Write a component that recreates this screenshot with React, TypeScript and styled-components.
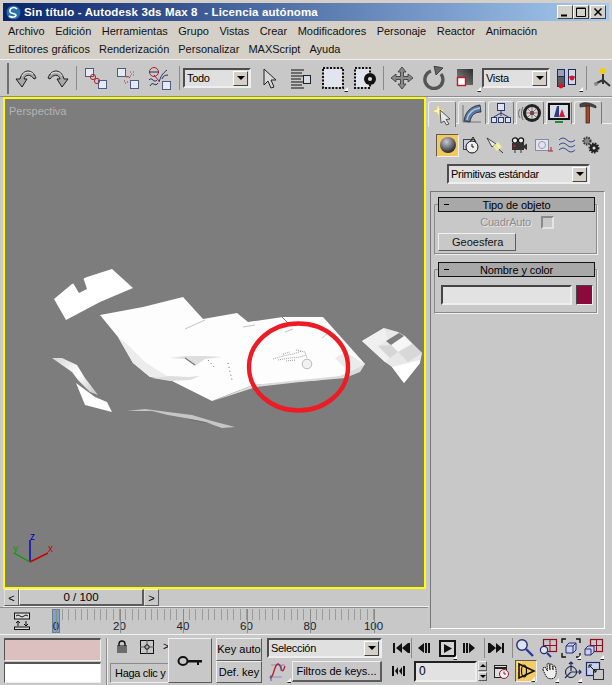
import React from "react";
import styled, {createGlobalStyle, css} from "styled-components";

const GlobalStyle = createGlobalStyle`
    html, body {
        margin: 0;
        padding: 0;
        background: #c8c8c8;
    }
    * {
        box-sizing: border-box;
    }
`;

const raised = css`
    border: 1px solid;
    border-color: #f0f0f0 #5c5c5c #5c5c5c #f0f0f0;
`;

const sunken = css`
    border: 1px solid;
    border-color: #5c5c5c #f0f0f0 #f0f0f0 #5c5c5c;
`;

const Window = styled.div`
    width: 612px;
    height: 685px;
    overflow: hidden;
    background: #c8c8c8;
    color: #000;
    font-family: "Liberation Sans", Arial, sans-serif;
    font-size: 11px;
`;

const TopChrome = styled.div`
    background: #d4d0c8;
    padding: 3px 3px 0;
    height: 59px;
`;

const TitleBar = styled.div`
    height: 18px;
    margin-bottom: 1px;
    display: flex;
    align-items: center;
    padding: 0 3px 0 3px;
    background: linear-gradient(to right, #0a246a, #a6caf0);
    color: #fff;
    font-weight: bold;
    font-size: 11.5px;
    letter-spacing: 0.13px;
    gap: 3px;
    white-space: pre;
`;

const TitleText = styled.span`
    flex: 1;
`;

const WinButtons = styled.div`
    display: flex;
    gap: 0;
`;

const WinButton = styled.div<{$gap?: number}>`
    width: 16px;
    height: 14px;
    margin-left: ${p => p.$gap || 0}px;
    background: #d4d0c8;
    border: 1px solid;
    border-color: #fff #404040 #404040 #fff;
    display: flex;
    align-items: center;
    justify-content: center;
`;

const MenuRow = styled.div<{$gap: number}>`
    display: flex;
    height: 18px;
    align-items: center;
    gap: ${p => p.$gap}px;
    padding-left: 5px;
    color: #111;
`;

const Toolbar = styled.div`
    height: 38px;
    display: flex;
    align-items: center;
    padding-left: 7px;
    background: #c8c8c8;
    border-top: 1px solid #f0f0f0;
    border-bottom: 1px solid #8c8c8c;
`;

const Grip = styled.div`
    width: 3px;
    height: 31px;
    margin-right: 1px;
    border-left: 1px solid #707070;
    border-right: 1px solid #707070;
`;

const ToolSep = styled.div<{$m?: number}>`
    width: 1px;
    height: 24px;
    margin: 0 ${p => p.$m ?? 2}px;
    background: #8a8a8a;
    flex: none;
`;

const Slot = styled.div<{$w?: number}>`
    position: relative;
    width: ${p => p.$w || 32}px;
    height: 26px;
    flex: none;
    display: flex;
    align-items: center;
    justify-content: center;
`;

const Flyout = styled.div`
    position: absolute;
    right: 1px;
    bottom: 0;
    width: 0;
    height: 0;
    border-left: 4px solid transparent;
    border-bottom: 4px solid #fff;
    filter: drop-shadow(0 1px 0 #222);
`;

const Select = styled.div<{$w: number; $h?: number}>`
    width: ${p => p.$w}px;
    height: ${p => p.$h || 20}px;
    flex: none;
    display: flex;
    align-items: center;
    justify-content: space-between;
    padding: 0 1px 0 2px;
    background: #e0e0e0;
    border: 2px solid;
    border-color: #4c4c4c #eee #eee #4c4c4c;
    font-size: 11px;
    letter-spacing: -0.3px;
`;

const SelectArrow = styled.div`
    width: 15px;
    height: 15px;
    background: #d4d0c8;
    border: 1px solid;
    border-color: #fff #404040 #404040 #fff;
    display: flex;
    align-items: center;
    justify-content: center;
    &::after {
        content: "";
        border-left: 4px solid transparent;
        border-right: 4px solid transparent;
        border-top: 4px solid #000;
    }
`;

const Main = styled.div`
    display: flex;
    height: 537px;
`;

const LeftColumn = styled.div`
    width: 428px;
    flex: none;
    padding-left: 3px;
    display: flex;
    flex-direction: column;
`;

const Viewport = styled.div`
    position: relative;
    width: 423px;
    height: 492px;
    flex: none;
    background: #7d7d7d;
    border: 2px solid #ffff00;
`;

const ViewLabel = styled.div`
    position: absolute;
    left: 4px;
    top: 6px;
    color: #b4b4b4;
    font-size: 11px;
`;

const Scene = styled.svg`
    display: block;
`;

const TimeRow = styled.div`
    height: 18px;
    display: flex;
    align-items: stretch;
    padding-left: 1px;
    border-bottom: 1px solid #f0f0f0;
    margin-right: -1px;
`;

const TimeArrow = styled.div`
    width: 15px;
    display: flex;
    align-items: center;
    justify-content: center;
    ${raised};
    border-left-color: #ddd;
    font-size: 11px;
`;

const TimeThumb = styled.div`
    width: 125px;
    display: flex;
    align-items: center;
    justify-content: center;
    background: #c8c8c8;
    ${raised};
    border-bottom-width: 2px;
    border-right-width: 2px;
    font-size: 11.5px;
`;

const RulerRow = styled.div`
    height: 27px;
    display: flex;
    border-top: 1px solid #8c8c8c;
    margin-left: -3px;
`;

const RulerIcon = styled.div`
    width: 52px;
    flex: none;
    display: flex;
    align-items: center;
    justify-content: center;
    padding-right: 8px;
`;

const RulerTrack = styled.div`
    position: relative;
    flex: 1;
`;

const Ticks = styled.div`
    position: absolute;
    left: 10px;
    right: 54px;
    top: 1px;
    height: 11px;
    background: repeating-linear-gradient(to right, #9a9a9a 0, #9a9a9a 1px, transparent 1px, transparent 6.35px);
`;

const RulerMark = styled.span`
    position: absolute;
    top: 12px;
    width: 30px;
    margin-left: -15px;
    text-align: center;
    font-size: 11.5px;
    color: #222;
    &::before {
        content: "";
        position: absolute;
        left: 15px;
        top: -11px;
        height: 24px;
        width: 1px;
        background: #8a8a8a;
    }
`;

const TimeMarker = styled.div`
    position: absolute;
    left: 0;
    top: 1px;
    width: 8px;
    height: 24px;
    background: #7da2c6;
    border: 1px solid #6a7f94;
`;

const Panel = styled.div`
    flex: 1;
    position: relative;
    display: flex;
    flex-direction: column;
    border-top: 1px solid #f0f0f0;
`;

const TabRow = styled.div`
    display: flex;
    gap: 2px;
    height: 26px;
    padding: 3px 0 0;
    border-bottom: 1px solid #f0f0f0;
`;

const Tab = styled.div<{$active?: boolean; $w: number}>`
    width: ${p => p.$w}px;
    height: ${p => (p.$active ? 26 : 23)}px;
    display: flex;
    align-items: center;
    justify-content: center;
    border: 1px solid #eee;
    border-right-color: #777;
    border-bottom: none;
    border-radius: 3px 3px 0 0;
    background: #c8c8c8;
    z-index: 1;
`;

const CategoryRow = styled.div`
    display: flex;
    align-items: center;
    height: 24px;
    margin-top: 9px;
    padding-left: 8px;
`;

const CategoryButton = styled.div<{$active?: boolean}>`
    width: ${p => (p.$active ? 23 : 24)}px;
    height: 23px;
    display: flex;
    align-items: center;
    justify-content: center;
    flex: none;
    ${p => p.$active && css`
        background: #f4c95c;
        ${sunken};
    `}
`;

const PanelSelect = styled.div`
    margin: 7px 0 0 19px;
`;

const Frame = styled.div`
    width: 175px;
    height: 438px;
    margin: 7px 0 0 2px;
    padding: 5px 6px 0 3px;
    border: 1px solid #777;
    border-right-color: #fff;
    border-bottom-color: #fff;
`;

const Rollout = styled.div<{$h: number}>`
    position: relative;
    height: ${p => p.$h}px;
    margin-bottom: 7px;
    padding-top: 7px;
`;

const RolloutBody = styled.div`
    height: 100%;
    padding: 10px 3px 0 3px;
    border: 1px solid #f0f0f0;
    border-top: 1px solid #8a8a8a;
    border-left-color: #8a8a8a;
    border-top-left-radius: 2px;
    border-top-right-radius: 2px;
    box-shadow: inset -1px -1px 0 #8a8a8a;
`;

const RolloutTitle = styled.div`
    position: absolute;
    left: 4px;
    right: 3px;
    top: 0;
    height: 15px;
    background: #a8a8a8;
    border: 1px solid #111;
    display: flex;
    align-items: center;
    justify-content: center;
    font-size: 11px;
    letter-spacing: -0.1px;
    &::before {
        content: "";
        position: absolute;
        left: 5px;
        top: 6px;
        width: 5px;
        height: 1px;
        background: #000;
    }
`;

const DisabledRow = styled.div`
    display: flex;
    justify-content: flex-end;
    align-items: center;
    gap: 10px;
    height: 14px;
    padding-right: 40px;
    color: #8c8c8c;
    text-shadow: 1px 1px 0 #e6e6e6;
    font-size: 11px;
    letter-spacing: -0.2px;
`;

const CheckBox = styled.div`
    width: 13px;
    height: 13px;
    border: 2px solid;
    border-color: #8a8a8a #e4e4e4 #e4e4e4 #8a8a8a;
`;

const PanelButton = styled.div`
    width: 78px;
    height: 18px;
    margin-top: 4px;
    display: flex;
    align-items: center;
    padding-left: 13px;
    ${raised};
    font-size: 11px;
    color: #111;
`;

const NameRow = styled.div`
    display: flex;
    gap: 4px;
    padding: 5px 0 0 3px;
`;

const NameField = styled.div`
    width: 131px;
    height: 20px;
    background: #e2e2e2;
    border: 2px solid;
    border-color: #444 #eee #eee #444;
`;

const Swatch = styled.div`
    width: 17px;
    height: 20px;
    background: #8a0a3c;
    border: 1px solid;
    border-color: #444 #eee #eee #444;
`;

const Bottom = styled.div`
    height: 51px;
    display: flex;
    border-top: 1px solid #f0f0f0;
    padding-top: 3px;
`;

const ColorStack = styled.div`
    width: 107px;
    padding-left: 4px;
    flex: none;
    display: flex;
    flex-direction: column;
    gap: 1px;
    border-right: 1px solid #8a8a8a;
`;

const ColorBox = styled.div<{$c: string; $h: number}>`
    width: 97px;
    height: ${p => p.$h}px;
    background: ${p => p.$c};
    border: 1px solid;
    border-width: 2px 1px 1px 1px;
    border-color: #555 #eee #eee #555;
`;

const StatusColumn = styled.div`
    width: 61px;
    flex: none;
    padding-left: 2px;
    overflow: hidden;
    display: flex;
    flex-direction: column;
    border-left: 1px solid #f0f0f0;
`;

const LockRow = styled.div`
    height: 17px;
    display: flex;
    align-items: center;
    padding-left: 6px;
    gap: 11px;
    font-size: 10px;
`;

const LockArrow = styled.span`
    margin-left: -3px;
`;

const PromptBox = styled.div`
    width: 80px;
    height: 20px;
    margin-top: 8px;
    display: flex;
    align-items: center;
    padding-left: 4px;
    border: 1px solid;
    border-color: #8a8a8a #f0f0f0 #f0f0f0 #8a8a8a;
    font-size: 11px;
    letter-spacing: -0.3px;
    white-space: nowrap;
`;

const KeyButton = styled.div`
    width: 44px;
    height: 45px;
    flex: none;
    display: flex;
    align-items: center;
    justify-content: center;
    background: #c8c8c8;
    ${raised};
`;

const KeyColumn = styled.div`
    width: 46px;
    margin-left: 4px;
    flex: none;
    display: flex;
    flex-direction: column;
`;

const KeySmall = styled.div`
    height: 22.5px;
    display: flex;
    align-items: center;
    justify-content: center;
    ${raised};
    font-size: 11px;
    white-space: nowrap;
`;

const FilterColumn = styled.div`
    width: 115px;
    margin-left: 5px;
    flex: none;
    display: flex;
    flex-direction: column;
    gap: 2px;
`;

const FilterRow = styled.div`
    display: flex;
    align-items: center;
    height: 22px;
`;

const FilterCurve = styled.div`
    position: relative;
    width: 25px;
    height: 22px;
    flex: none;
    display: flex;
    align-items: center;
    justify-content: flex-start;
    padding-left: 1px;
`;

const FilterButton = styled.div`
    flex: 1;
    height: 21px;
    display: flex;
    align-items: center;
    justify-content: center;
    ${raised};
    border-bottom-width: 2px;
    border-right-width: 2px;
    font-size: 11px;
`;

const ControlColumn = styled.div`
    margin: -1px 0 0 10px;
    flex: none;
    display: flex;
    flex-direction: column;
    gap: 1px;
`;

const ControlRow = styled.div`
    display: flex;
    align-items: center;
    height: 22px;
`;

const CtlSlot = styled.div<{$w?: number; $active?: boolean}>`
    position: relative;
    width: ${p => p.$w || 23}px;
    height: 22px;
    flex: none;
    display: flex;
    align-items: center;
    justify-content: center;
    ${p => p.$active && css`
        background: #f4c95c;
        ${sunken};
    `}
`;

const CtlSep = styled.div<{$l?: number; $r?: number}>`
    width: 1px;
    height: 20px;
    flex: none;
    margin: 0 ${p => p.$r || 0}px 0 ${p => p.$l || 0}px;
    background: #8a8a8a;
`;

const FrameField = styled.div`
    width: 63px;
    height: 21px;
    flex: none;
    margin-left: 9px;
    padding-left: 3px;
    display: flex;
    align-items: center;
    background: #e2e2e2;
    font-size: 12px;
    border: 2px solid;
    border-color: #222 #eee #eee #222;
`;

const Spinner = styled.div`
    width: 9px;
    height: 20px;
    margin-left: 1px;
    flex: none;
    display: flex;
    flex-direction: column;
    gap: 1px;
`;

const SpinPart = styled.div<{$down?: boolean}>`
    flex: 1;
    display: flex;
    align-items: center;
    justify-content: center;
    ${raised};
    &::after {
        content: "";
        border-left: 3px solid transparent;
        border-right: 3px solid transparent;
        ${p => (p.$down ? "border-top: 3px solid #000;" : "border-bottom: 3px solid #000;")}
    }
`;

type IconProps = {s?: number; w?: number; h?: number; children: React.ReactNode};

const Ico = ({s = 24, w, h, children}: IconProps) => (
    <svg width={w || s} height={h || s} viewBox={`0 0 ${w || s} ${h || s}`} style={{display: "block", flex: "none"}}>
        {children}
    </svg>
);

const Undo = ({flip}: {flip?: boolean}) => (
    <Ico s={24}>
        <g transform={flip ? "translate(24 0) scale(-1 1)" : undefined}>
            <path d="M2 13 L8 21 L13 13 L10 13 C11 8 17 8 20 13 L22 12 C19 3 9 2 6 13 Z" fill="#a8a8a8" stroke="#1c1c1c" strokeWidth="1" strokeLinejoin="round"/>
            <path d="M8 10 C10 6 15 5 19 8" stroke="#e8e8e8" fill="none"/>
        </g>
    </Ico>
);

const NodeSquare = ({x, y}: {x: number; y: number}) => (
    <rect x={x + 0.5} y={y + 0.5} width="8" height="8" fill="#e6e8f2" stroke="#4d5a8a"/>
);

const LinkIcon = () => (
    <Ico s={24}>
        <NodeSquare x={2} y={2}/>
        <NodeSquare x={15} y={14}/>
        <circle cx="10" cy="11" r="2.6" fill="none" stroke="#b02030"/>
        <circle cx="14" cy="15" r="2.6" fill="none" stroke="#b02030"/>
    </Ico>
);

const UnlinkIcon = () => (
    <Ico s={24}>
        <NodeSquare x={2} y={2}/>
        <NodeSquare x={15} y={14}/>
        <path d="M15 6h1M18 6h1M16 8h1M18 9h1M15 10h1" stroke="#b04050"/>
        <path d="M11 11 a3 3 0 0 1 4 1 M9 15h1M10 17h1M12 16h1" stroke="#b02030" fill="none"/>
    </Ico>
);

const BindIcon = () => (
    <Ico s={24}>
        <NodeSquare x={15} y={15}/>
        <circle cx="7" cy="6" r="4.5" fill="none" stroke="#b02030"/>
        <path d="M2 6h10M2 14 C5 10 7 18 10 14 M3 20 C6 14 8 22 11 17 M12 16 C14 10 15 8 20 4 M15 13 C16 10 18 9 21 9" stroke="#26305e" fill="none"/>
        <path d="M7 9 L12 15" stroke="#b02030"/>
    </Ico>
);

const Cursor = () => (
    <Ico s={22}>
        <path d="M6 2 L6 18 L10 14 L13 21 L16 20 L13 13 L18 13 Z" fill="#d8d8d8" stroke="#222" strokeWidth="1"/>
    </Ico>
);

const SelectByName = () => (
    <Ico s={24}>
        <path d="M2 4h13M2 7h11M2 10h13M2 13h10M2 16h13M2 19h11M2 22h13" stroke="#111"/>
        <rect x="14.5" y="9.5" width="7" height="8" fill="#d6d9e6" stroke="#222"/>
    </Ico>
);

const RegionRect = () => (
    <Ico s={24}>
        <rect x="3" y="3" width="18" height="18" fill="#e2e4ee"/>
        <rect x="2" y="2" width="20" height="20" fill="none" stroke="#111" strokeWidth="2" strokeDasharray="2 1.5"/>
    </Ico>
);

const CrossingRect = () => (
    <Ico s={24}>
        <rect x="3" y="3" width="14" height="18" fill="#e2e4ee"/>
        <rect x="2" y="2" width="15" height="20" fill="none" stroke="#111" strokeWidth="2" strokeDasharray="2 1.5"/>
        <circle cx="17" cy="13" r="6" fill="#111"/>
        <circle cx="17" cy="13" r="2" fill="#ddd"/>
    </Ico>
);

const MoveIcon = () => (
    <Ico s={24}>
        <path d="M12 1 L16 6 L13.5 6 L13.5 10.5 L18 10.5 L18 8 L23 12 L18 16 L18 13.5 L13.5 13.5 L13.5 18 L16 18 L12 23 L8 18 L10.5 18 L10.5 13.5 L6 13.5 L6 16 L1 12 L6 8 L6 10.5 L10.5 10.5 L10.5 6 L8 6 Z" fill="#8a8a8a" stroke="#333" strokeWidth="0.8"/>
    </Ico>
);

const RotateIcon = () => (
    <Ico s={24}>
        <path d="M9 5 A9 9 0 1 0 19 8" fill="none" stroke="#555" strokeWidth="3.4"/>
        <path d="M12 0 L21 2 L14 9 Z" fill="#666" stroke="#222" strokeWidth="0.7"/>
    </Ico>
);

const ScaleIcon = () => (
    <svg width="24" height="24" viewBox="0 0 24 24" style={{display: "block"}}>
        <defs>
            <linearGradient id="scaleFill" x1="0" y1="1" x2="1" y2="0">
                <stop offset="0" stopColor="#8c8c8c"/>
                <stop offset="1" stopColor="#2c2c2c"/>
            </linearGradient>
        </defs>
        <rect x="3" y="3" width="16" height="16" fill="url(#scaleFill)"/>
        <rect x="3.5" y="11.5" width="8" height="8" fill="#fff" stroke="#c01828" strokeWidth="1.4"/>
    </svg>
);

const PivotIcon = () => (
    <Ico w={28} h={24}>
        <rect x="3.5" y="3.5" width="7" height="17" fill="#5c5c5c" stroke="#1c2a60"/>
        <rect x="3.5" y="3.5" width="7" height="7" fill="#9aa0b8" stroke="#1c2a60"/>
        <circle cx="7" cy="20" r="2.4" fill="#e01020"/>
        <rect x="14.5" y="3.5" width="7" height="15" fill="#d4d8e6" stroke="#1c2a60"/>
        <path d="M15 11 H21" stroke="#1c2a60"/>
        <circle cx="18" cy="12" r="2.4" fill="#e01020"/>
    </Ico>
);

const FigureIcon = () => (
    <Ico w={20} h={24}>
        <circle cx="10" cy="5" r="3" fill="#f2d000"/>
        <path d="M10 8 V18 M10 14 L2 18 M10 14 L17 20" stroke="#333" strokeWidth="2" fill="none"/>
        <circle cx="3" cy="18" r="2" fill="#888"/>
    </Ico>
);

const TabCreate = () => (
    <Ico s={22}>
        <path d="M7 0 L8.6 5 L14 6 L9 8 L8 13 L6 8.5 L1 7.5 L5.6 5.5 Z" fill="#fff8c0" stroke="#d8c060" strokeWidth="0.5"/>
        <path d="M9 6 L19 15 L15 15.5 L18 20 L15.5 21 L13 17 L10 19 Z" fill="#e8e8e8" stroke="#333" strokeWidth="0.8"/>
    </Ico>
);

const TabModify = () => (
    <Ico s={22}>
        <path d="M2 3.5 V20 H20" stroke="#222" fill="none" strokeDasharray="1 1"/>
        <path d="M3 19 C4 10 10 4 19 3 L20 10 C14 10 10 13 9 20 Z" fill="#5878a8" stroke="#222" strokeWidth="0.8"/>
        <path d="M6 18 C7 11 12 7 19 6" stroke="#b8c8e0" strokeWidth="1.5" fill="none"/>
    </Ico>
);

const TabHierarchy = () => (
    <Ico s={22}>
        <rect x="7.5" y="1.5" width="7" height="7" fill="#dfe3f0" stroke="#2e3a70"/>
        <path d="M11 8.5 V14 M3.5 15 L11 11 L18.5 15" stroke="#2e3a70" fill="none"/>
        <rect x="1.5" y="15.5" width="5" height="5" fill="#dfe3f0" stroke="#2e3a70"/>
        <rect x="8.5" y="15.5" width="5" height="5" fill="#dfe3f0" stroke="#2e3a70"/>
        <rect x="15.5" y="15.5" width="5" height="5" fill="#dfe3f0" stroke="#2e3a70"/>
    </Ico>
);

const TabMotion = () => (
    <Ico s={24}>
        <path d="M2 8 C0 11 0 14 2 17 M5 6 C3 10 3 15 5 19" stroke="#666" fill="none"/>
        <circle cx="14" cy="12" r="9" fill="#222"/>
        <circle cx="14" cy="12" r="6" fill="#d8d8d8"/>
        <circle cx="14" cy="12" r="2.2" fill="#c01828"/>
        <path d="M14 6V18M8 12H20M10 8l8 8M18 8l-8 8" stroke="#555" strokeWidth="0.7"/>
    </Ico>
);

const TabDisplay = () => (
    <Ico s={24}>
        <rect x="2" y="3" width="20" height="15" fill="#d8dde8" stroke="#111" strokeWidth="2"/>
        <path d="M7 16 L10 5 H12 V16 Z" fill="#2a3f8c"/>
        <path d="M12 16 L15 8 L18 16 Z" fill="#d81828"/>
        <path d="M8 21h8" stroke="#1f8a3c" strokeWidth="2"/>
    </Ico>
);

const TabUtility = () => (
    <Ico s={24}>
        <path d="M4 3 C8 1 14 1 20 5 L20 7 L14 5 L4 6 Z" fill="#444" stroke="#222" strokeWidth="0.6"/>
        <rect x="10" y="5" width="3.6" height="17" fill="#a04a2a" stroke="#3a1c10" strokeWidth="0.7"/>
    </Ico>
);

const Sphere = () => (
    <svg width="18" height="18" viewBox="0 0 18 18" style={{display: "block"}}>
        <defs>
            <radialGradient id="sphereFill" cx="0.4" cy="0.3" r="0.75">
                <stop offset="0" stopColor="#c8ccd6"/>
                <stop offset="1" stopColor="#1c1c22"/>
            </radialGradient>
        </defs>
        <circle cx="9" cy="9" r="8" fill="url(#sphereFill)"/>
    </svg>
);

const CatShapes = () => (
    <Ico s={20}>
        <rect x="2.5" y="4.5" width="11" height="10" fill="#c8d0e0" stroke="#444"/>
        <path d="M9 7 L12 2 L15 7" fill="none" stroke="#222"/>
        <circle cx="11" cy="12" r="6" fill="#eee" stroke="#111"/>
        <path d="M11 9v3h2" stroke="#111" fill="none"/>
    </Ico>
);

const CatLight = () => (
    <Ico s={20}>
        <path d="M2 3 L11 9 L7 12 Z" fill="#eee" stroke="#222" strokeWidth="0.8"/>
        <path d="M9 10 L18 18" stroke="#333"/>
        <path d="M8 11 L13 7 L17 12 L12 16 Z" fill="#f6f0a0" opacity="0.9"/>
    </Ico>
);

const CatCamera = () => (
    <Ico s={20}>
        <circle cx="6" cy="5.5" r="2.6" fill="#eee" stroke="#111" strokeWidth="1.2"/>
        <circle cx="12" cy="5.5" r="2.6" fill="#eee" stroke="#111" strokeWidth="1.2"/>
        <rect x="3" y="8" width="12" height="7" fill="#333"/>
        <circle cx="5.5" cy="11" r="1.2" fill="#d01828"/>
        <path d="M15 10.5 L18 8.5 V15 L15 13 Z" fill="#333"/>
        <path d="M6 15v3M12 15v3" stroke="#333"/>
    </Ico>
);

const CatHelper = () => (
    <Ico s={20}>
        <rect x="2.5" y="4.5" width="13" height="11" fill="#e0e4f0" stroke="#8a8a9c"/>
        <circle cx="9" cy="10" r="3.5" fill="none" stroke="#9a9aac"/>
        <path d="M15 16 H20 M18 12 V16" stroke="#b02030"/>
    </Ico>
);

const CatWaves = () => (
    <Ico s={20}>
        <path d="M2 5 Q6 1 10 5 T18 5 M2 10 Q6 6 10 10 T18 10 M2 15 Q6 11 10 15 T18 15" stroke="#3a4a8a" fill="none"/>
    </Ico>
);

const CatGear = () => (
    <Ico s={20}>
        <circle cx="6" cy="6" r="3.5" fill="#888" stroke="#333" strokeWidth="2" strokeDasharray="1.5 1"/>
        <circle cx="13" cy="13" r="4.2" fill="#222" stroke="#222" strokeWidth="2.5" strokeDasharray="1.5 1"/>
        <circle cx="13" cy="13" r="1.5" fill="#ddd"/>
    </Ico>
);

const TrackIcon = () => (
    <Ico w={18} h={18}>
        <rect x="1.5" y="1" width="15" height="6" fill="#ddd" stroke="#111"/>
        <path d="M3 4 q2 -2 4 0 t4 0 t4 0" stroke="#111" fill="none"/>
        <path d="M5 14 V9 M3 11 L5 9 L7 11 M13 9 V14 M11 12 L13 14 L15 12" stroke="#111" fill="none"/>
        <rect x="1.5" y="15" width="15" height="2.5" fill="#ddd" stroke="#111"/>
    </Ico>
);

const LockIcon = () => (
    <Ico w={12} h={14}>
        <path d="M3 6 V4 a3 3 0 0 1 6 0 V6" fill="none" stroke="#111" strokeWidth="1.4"/>
        <path d="M1 6h10M1 8h10M1 10h10M1 12h10" stroke="#111" strokeWidth="1.2"/>
    </Ico>
);

const CenterBox = () => (
    <Ico s={16}>
        <rect x="1.5" y="1.5" width="13" height="13" fill="none" stroke="#111"/>
        <path d="M8 1V15M1 8H15" stroke="#555"/>
        <circle cx="8" cy="8" r="2.2" fill="#aaa" stroke="#111"/>
    </Ico>
);

const KeyIcon = () => (
    <Ico w={26} h={12}>
        <ellipse cx="6" cy="6" rx="4.5" ry="4" fill="none" stroke="#111" strokeWidth="2"/>
        <path d="M10 5 H25 V7.5 H22 V10 H20 V7.5 H10 Z" fill="#111"/>
    </Ico>
);

const CurveIcon = () => (
    <Ico s={20}>
        <path d="M1 16 H14 M3 4 H17" stroke="#8a8ac8"/>
        <path d="M2 17 C6 17 6 3 10 3 S13 17 17 5" stroke="#c01828" fill="none" strokeWidth="1.3"/>
        <path d="M3 14 L3 20 M13 4 V10" stroke="#4a5ab0"/>
    </Ico>
);

const Bars = ({x}: {x: number}) => <rect x={x} y="3" width="2" height="10" fill="#111"/>;

const FirstIcon = () => (
    <Ico w={18} h={16}>
        <Bars x={0}/><path d="M3 8 L9 3 V13 Z M9 8 L15 3 V13 Z" fill="#111"/><Bars x={15}/>
    </Ico>
);

const PrevIcon = () => (
    <Ico w={15} h={16}>
        <path d="M1 8 L7 3 V13 Z" fill="#111"/>
        <rect x="8" y="3" width="2" height="10" fill="#111"/>
        <rect x="11" y="3" width="2" height="10" fill="#111"/>
    </Ico>
);

const NextIcon = () => (
    <Ico w={15} h={16}>
        <rect x="1" y="3" width="2" height="10" fill="#111"/>
        <rect x="4" y="3" width="2" height="10" fill="#111"/>
        <path d="M7 3 L13 8 L7 13 Z" fill="#111"/>
    </Ico>
);

const LastIcon = () => (
    <Ico w={18} h={16}>
        <Bars x={1}/><path d="M3 3 L9 8 L3 13 Z M9 3 L15 8 L9 13 Z" fill="#111"/><Bars x={15}/>
    </Ico>
);

const PlayIcon = () => (
    <Ico s={17}>
        <rect x="1" y="1" width="15" height="15" fill="#d4d4d4" stroke="#111" strokeWidth="2"/>
        <path d="M5 4 L13 8.5 L5 13 Z" fill="#111"/>
    </Ico>
);

const KeyModeIcon = () => (
    <Ico w={13} h={12}>
        <path d="M0 1h2v10H0z M3 6 L6 2 V10 Z M7 6 L10 2 V10 Z M11 1h2v10h-2z" fill="#111"/>
    </Ico>
);

const TimeConfig = () => (
    <Ico s={17}>
        <rect x="1.5" y="2.5" width="12" height="12" fill="#ddd" stroke="#222"/>
        <path d="M1 5h13" stroke="#222" strokeWidth="2"/>
        <circle cx="11" cy="11" r="4.5" fill="#eee" stroke="#a01828"/>
        <path d="M11 8.5V11H13" stroke="#a01828" fill="none"/>
    </Ico>
);

const NavZoom = () => (
    <Ico s={20}>
        <circle cx="7" cy="7" r="5.2" fill="#dbe4f4" stroke="#2a2a6a" strokeWidth="1.4"/>
        <path d="M11 11 L18 18" stroke="#2a3a9a" strokeWidth="2.4"/>
    </Ico>
);

const NavZoomAll = () => (
    <Ico s={20}>
        <rect x="5.5" y="1.5" width="13" height="12" fill="none" stroke="#8a1020" strokeWidth="1.2"/>
        <path d="M12 1.5V13.5M5.5 7.5H18.5" stroke="#8a1020"/>
        <circle cx="6" cy="12" r="3.6" fill="#dbe4f4" stroke="#2a2a6a" strokeWidth="1.2"/>
        <path d="M9 15 L13 19" stroke="#2a3a9a" strokeWidth="2"/>
    </Ico>
);

const NavExtents = () => (
    <Ico s={20}>
        <path d="M1 5V1H5M15 1H19V5M1 15V19H5M15 19H19V15" stroke="#111" fill="none" strokeWidth="1.4"/>
        <path d="M5 8 L8 5 H15 V12 L12 15 H5 Z M5 8 H12 V15 M12 8 L15 5" fill="#c8d2ea" stroke="#2a2a7a"/>
    </Ico>
);

const NavExtentsAll = () => (
    <Ico s={20}>
        <rect x="6.5" y="1.5" width="12" height="12" fill="none" stroke="#8a1020" strokeWidth="1.2"/>
        <path d="M12.5 1.5V13.5M6.5 7.5H18.5" stroke="#8a1020"/>
        <path d="M1 11 L4 8 H10 V14 L7 17 H1 Z M1 11 H7 V17" fill="#c8d2ea" stroke="#2a2a7a"/>
    </Ico>
);

const NavField = () => (
    <Ico w={20} h={20}>
        <rect x="0" y="0" width="20" height="20" fill="#f3cc66"/>
        <path d="M1 1 h6 M1 4 h5 M1 7 h4 M1 10h3" stroke="#fff" strokeDasharray="1 1"/>
        <path d="M3 3 L18 10 L3 17 Z" fill="none" stroke="#111" strokeWidth="1.6"/>
        <ellipse cx="8" cy="10" rx="2.5" ry="6" fill="none" stroke="#111" strokeWidth="1.2"/>
    </Ico>
);

const NavHand = () => (
    <Ico s={20}>
        <path d="M4 9 L7 15 C8 18 14 19 16 16 C18 13 17 7 16 5 L14 5 V9 L13 3 L11 3 V9 L10 2 L8 3 L8.5 10 L6 6 L4 7 Z" fill="#eee" stroke="#111" strokeDasharray="1.5 0.7"/>
    </Ico>
);

const NavOrbit = () => (
    <Ico s={20}>
        <circle cx="9" cy="11" r="5.5" fill="none" stroke="#111"/>
        <path d="M9 10 V1 M7 3 L9 1 L11 3 M9 11 L19 11 M17 9 L19 11 L17 13 M9 11 L3 17" stroke="#1c2a70" fill="none" strokeWidth="1.2"/>
    </Ico>
);

const NavMax = () => (
    <Ico s={20}>
        <rect x="1.5" y="1.5" width="13" height="13" fill="#c8d2ea" stroke="#1c2a70" strokeWidth="1.2"/>
        <rect x="8.5" y="8.5" width="10" height="10" fill="#c8c8c8" stroke="#333"/>
        <path d="M4 4 L11 11 M4 4h3M4 4v3M11 11h-3M11 11v-3" stroke="#111" fill="none"/>
    </Ico>
);

const menuTop = ["Archivo", "Edición", "Herramientas", "Grupo", "Vistas", "Crear", "Modificadores", "Personaje", "Reactor", "Animación"];
const menuBottom = ["Editores gráficos", "Renderización", "Personalizar", "MAXScript", "Ayuda"];
const marks = [0, 20, 40, 60, 80, 100];

const SceneMesh = () => (
    <Scene width="419" height="488" viewBox="5 99 419 488">
        <defs>
            <linearGradient id="sliverShade" x1="0" y1="0" x2="1" y2="1">
                <stop offset="0" stopColor="#d6d6d6"/>
                <stop offset="0.5" stopColor="#ffffff"/>
                <stop offset="1" stopColor="#c4c4c4"/>
            </linearGradient>
        </defs>
        <path d="M54 299 L72 284 L87 277 L112 269 L133 288 L100 302 L66 320 Z" fill="#fff"/>
        <path d="M73 283 L83 277 L87 289 L79 293 Z" fill="#7d7d7d"/>

        <path d="M100 315 L143 307 L183 297 L203 319 L237 313 L248 322 L283 317 L323 317 L365 364 L349 375 L320 380 L253 385 L212 401 L170 380 L150 377 L133 363 L118 337 Z" fill="#fdfdfd"/>
        <path d="M118 337 L133 363 L150 377 L170 378 L145 362 L128 345 Z" fill="#ececec"/>
        <path d="M152 378 L170 376 L188 377 L200 376 L190 380 L170 381 Z" fill="#dedede"/>
        <path d="M253 385 L290 381 L340 376 L365 364 L360 372 L345 378 L300 382 L256 387 L213 401 Z" fill="#dcdcdc"/>
        <path d="M345 352 L365 364 L349 372 L335 358 Z" fill="#ebebeb"/>
        <path d="M170 358 L185 356 L205 356 L222 357 L205 359 L195 366 L186 359 Z" fill="#dedede"/>
        <path d="M185 358 L195 365" stroke="#777" strokeWidth="1.2"/>
        <path d="M208 360 L215 368 M228 363 L232 380" stroke="#666" strokeWidth="1" strokeDasharray="1 3"/>
        <path d="M282 317 L288 323" stroke="#777" strokeWidth="1"/>
        <path d="M185 329 L205 320 M243 327 L255 325 M285 332 L293 329 M322 338 L328 333" stroke="#c4c4c4" strokeWidth="1"/>

        <path d="M52 358 L62 358 L77 365 L85 378 L98 395 L90 392 L78 380 L72 372 Z" fill="url(#sliverShade)"/>
        <path d="M76 383 L95 397 L107 402 L112 412 L85 405 Z" fill="#fff"/>
        <path d="M127 411 L145 409 L168 412 L192 415 L212 421 L235 427 L222 428 L205 422 L185 418 L168 415 L152 411 Z" fill="#c6c6c6"/>
        <path d="M185 418 L205 422 L212 424 L195 421 Z" fill="#6c6c6c"/>

        <path d="M362 341 L384 328 L398 332 L405 336 L422 353 L420 363 L404 383 L392 367 L385 362 Z" fill="#e8e8e8"/>
        <path d="M362 341 L384 328 L388 340 L378 346 L390 358 L385 362 Z" fill="#f0f0f0"/>
        <path d="M392 367 L420 360 L420 363 L404 383 Z" fill="#ffffff"/>
        <path d="M391 345 L404 336 L412 344 L398 352 Z" fill="#f6f6f6"/>
        <path d="M398 352 L412 344 L422 353 L408 362 Z" fill="#d8d8d8"/>
        <path d="M378 346 L390 358 L398 352 L391 345 Z" fill="#d6d6d6"/>
        <path d="M386 341 L399 333 L404 336 L391 345 Z" fill="#7d7d7d"/>

        <g fill="none" stroke="#a0a0a0" strokeWidth="1" strokeDasharray="1 1">
            <path d="M273 359 L283 356 L293 354 L302 351"/>
            <path d="M278 360 L290 358 L300 357 L306 355"/>
            <path d="M283 354 L290 352"/>
            <path d="M296 350 L305 352 L307 358"/>
            <path d="M286 361 L296 360"/>
        </g>
        <circle cx="307" cy="364" r="4.8" fill="#f2f2f2" stroke="#a8a8a8" strokeWidth="0.8"/>
        <ellipse cx="298.5" cy="367" rx="49.5" ry="43.5" fill="none" stroke="#ed1c24" strokeWidth="4.4"/>

        <g fill="none" strokeWidth="1.4">
            <path d="M30 562 V540" stroke="#0000c0"/>
            <path d="M30 562 L48 553" stroke="#cc0000"/>
            <path d="M30 562 L14 553" stroke="#00a000"/>
        </g>
        <text x="30" y="540" fontSize="10" fill="#0000d0" fontFamily="Liberation Sans">z</text>
        <text x="48" y="552" fontSize="10" fill="#d00000" fontFamily="Liberation Sans">x</text>
        <text x="13" y="552" fontSize="10" fill="#00a000" fontFamily="Liberation Sans">y</text>
    </Scene>
);

const App = () => {
    return (
        <Window>
            <GlobalStyle/>
            <TopChrome>
                <TitleBar>
                    <Ico s={15}>
                        <circle cx="7.5" cy="7.5" r="7" fill="#2a6fa8"/>
                        <path d="M11 4 C8 1 3 3 4 7 C5 9 9 8 10 10 C10 12 6 13 3 11" stroke="#fff" strokeWidth="1.6" fill="none"/>
                    </Ico>
                    <TitleText>{"Sin título - Autodesk 3ds Max 8  - Licencia autónoma"}</TitleText>
                    <WinButtons>
                        <WinButton>
                            <Ico w={10} h={10}><path d="M1 8.5 H7" stroke="#000" strokeWidth="2"/></Ico>
                        </WinButton>
                        <WinButton>
                            <Ico w={10} h={10}><path d="M0.5 1 H9.5 V9.5 H0.5 Z M0.5 1.5 H9.5" stroke="#000" fill="none"/></Ico>
                        </WinButton>
                        <WinButton $gap={1}>
                            <Ico w={10} h={10}><path d="M1.5 1.5 L8.5 8.5 M8.5 1.5 L1.5 8.5" stroke="#000" strokeWidth="1.5"/></Ico>
                        </WinButton>
                    </WinButtons>
                </TitleBar>
                <MenuRow $gap={10.5}>{menuTop.map(m => <span key={m}>{m}</span>)}</MenuRow>
                <MenuRow $gap={9}>{menuBottom.map(m => <span key={m}>{m}</span>)}</MenuRow>
            </TopChrome>

            <Toolbar>
                <Grip/>
                <Slot><Undo/></Slot>
                <Slot><Undo flip/></Slot>
                <ToolSep/>
                <Slot><LinkIcon/></Slot>
                <Slot><UnlinkIcon/></Slot>
                <Slot><BindIcon/></Slot>
                <ToolSep $m={3.5}/>
                <Select $w={68}>Todo<SelectArrow/></Select>
                <Slot $w={2}/>
                <Slot><Cursor/></Slot>
                <Slot><SelectByName/></Slot>
                <Slot><RegionRect/><Flyout/></Slot>
                <Slot><CrossingRect/></Slot>
                <ToolSep/>
                <Slot><MoveIcon/></Slot>
                <Slot><RotateIcon/></Slot>
                <Slot><ScaleIcon/><Flyout/></Slot>
                <Select $w={68}>Vista<SelectArrow/></Select>
                <Slot $w={2}/>
                <Slot><PivotIcon/><Flyout/></Slot>
                <ToolSep/>
                <Slot $w={28}><FigureIcon/></Slot>
            </Toolbar>

            <Main>
                <LeftColumn>
                    <Viewport>
                        <ViewLabel>Perspectiva</ViewLabel>
                        <SceneMesh/>
                    </Viewport>
                    <TimeRow>
                        <TimeArrow>&lt;</TimeArrow>
                        <TimeThumb>0 / 100</TimeThumb>
                        <TimeArrow>&gt;</TimeArrow>
                    </TimeRow>
                    <RulerRow>
                        <RulerIcon><TrackIcon/></RulerIcon>
                        <RulerTrack>
                            <Ticks/>
                            <TimeMarker/>
                            {marks.map(m => (
                                <RulerMark key={m} style={{left: 4 + m * 3.175}}>{m}</RulerMark>
                            ))}
                        </RulerTrack>
                    </RulerRow>
                </LeftColumn>

                <Panel>
                    <TabRow>
                        <Tab $active $w={28}><TabCreate/></Tab>
                        <Tab $w={28}><TabModify/></Tab>
                        <Tab $w={26}><TabHierarchy/></Tab>
                        <Tab $w={28}><TabMotion/></Tab>
                        <Tab $w={26}><TabDisplay/></Tab>
                        <Tab $w={28}><TabUtility/></Tab>
                    </TabRow>
                    <CategoryRow>
                        <CategoryButton $active><Sphere/></CategoryButton>
                        <CategoryButton><CatShapes/></CategoryButton>
                        <CategoryButton><CatLight/></CategoryButton>
                        <CategoryButton><CatCamera/></CategoryButton>
                        <CategoryButton><CatHelper/></CategoryButton>
                        <CategoryButton><CatWaves/></CategoryButton>
                        <CategoryButton><CatGear/></CategoryButton>
                    </CategoryRow>
                    <PanelSelect>
                        <Select $w={143}>Primitivas estándar<SelectArrow/></Select>
                    </PanelSelect>
                    <Frame>
                        <Rollout $h={58}>
                            <RolloutTitle>Tipo de objeto</RolloutTitle>
                            <RolloutBody>
                                <DisabledRow>CuadrAuto<CheckBox/></DisabledRow>
                                <PanelButton>Geoesfera</PanelButton>
                            </RolloutBody>
                        </Rollout>
                        <Rollout $h={52}>
                            <RolloutTitle>Nombre y color</RolloutTitle>
                            <RolloutBody>
                                <NameRow>
                                    <NameField/>
                                    <Swatch/>
                                </NameRow>
                            </RolloutBody>
                        </Rollout>
                    </Frame>
                </Panel>
            </Main>

            <Bottom>
                <ColorStack>
                    <ColorBox $c="#dcc0c0" $h={23}/>
                    <ColorBox $c="#fff" $h={21}/>
                </ColorStack>
                <StatusColumn>
                    <LockRow>
                        <LockIcon/>
                        <CenterBox/>
                        <LockArrow>&gt;</LockArrow>
                    </LockRow>
                    <PromptBox>Haga clic y</PromptBox>
                </StatusColumn>
                <KeyButton><KeyIcon/></KeyButton>
                <KeyColumn>
                    <KeySmall>Key auto</KeySmall>
                    <KeySmall>Def. key</KeySmall>
                </KeyColumn>
                <FilterColumn>
                    <Select $w={115}>Selección<SelectArrow/></Select>
                    <FilterRow>
                        <FilterCurve><CurveIcon/><Flyout/></FilterCurve>
                        <FilterButton>Filtros de keys...</FilterButton>
                    </FilterRow>
                </FilterColumn>
                <ControlColumn>
                    <ControlRow>
                        <CtlSlot $w={19}><FirstIcon/></CtlSlot>
                        <CtlSep/>
                        <CtlSlot $w={24}><PrevIcon/></CtlSlot>
                        <CtlSlot $w={22}><PlayIcon/><Flyout/></CtlSlot>
                        <CtlSlot $w={22}><NextIcon/></CtlSlot>
                        <CtlSep $l={4}/>
                        <CtlSlot $w={22}><LastIcon/></CtlSlot>
                        <CtlSep $l={5}/>
                        <CtlSlot><NavZoom/></CtlSlot>
                        <CtlSlot><NavZoomAll/></CtlSlot>
                        <CtlSlot><NavExtents/><Flyout/></CtlSlot>
                        <CtlSlot><NavExtentsAll/><Flyout/></CtlSlot>
                    </ControlRow>
                    <ControlRow>
                        <CtlSlot $w={13}><KeyModeIcon/></CtlSlot>
                        <FrameField>0</FrameField>
                        <Spinner>
                            <SpinPart/>
                            <SpinPart $down/>
                        </Spinner>
                        <CtlSlot $w={28}><TimeConfig/></CtlSlot>
                        <CtlSlot $w={22} $active><NavField/><Flyout/></CtlSlot>
                        <CtlSlot><NavHand/><Flyout/></CtlSlot>
                        <CtlSlot><NavOrbit/><Flyout/></CtlSlot>
                        <CtlSlot><NavMax/></CtlSlot>
                    </ControlRow>
                </ControlColumn>
            </Bottom>
        </Window>
    );
}

export default App;
